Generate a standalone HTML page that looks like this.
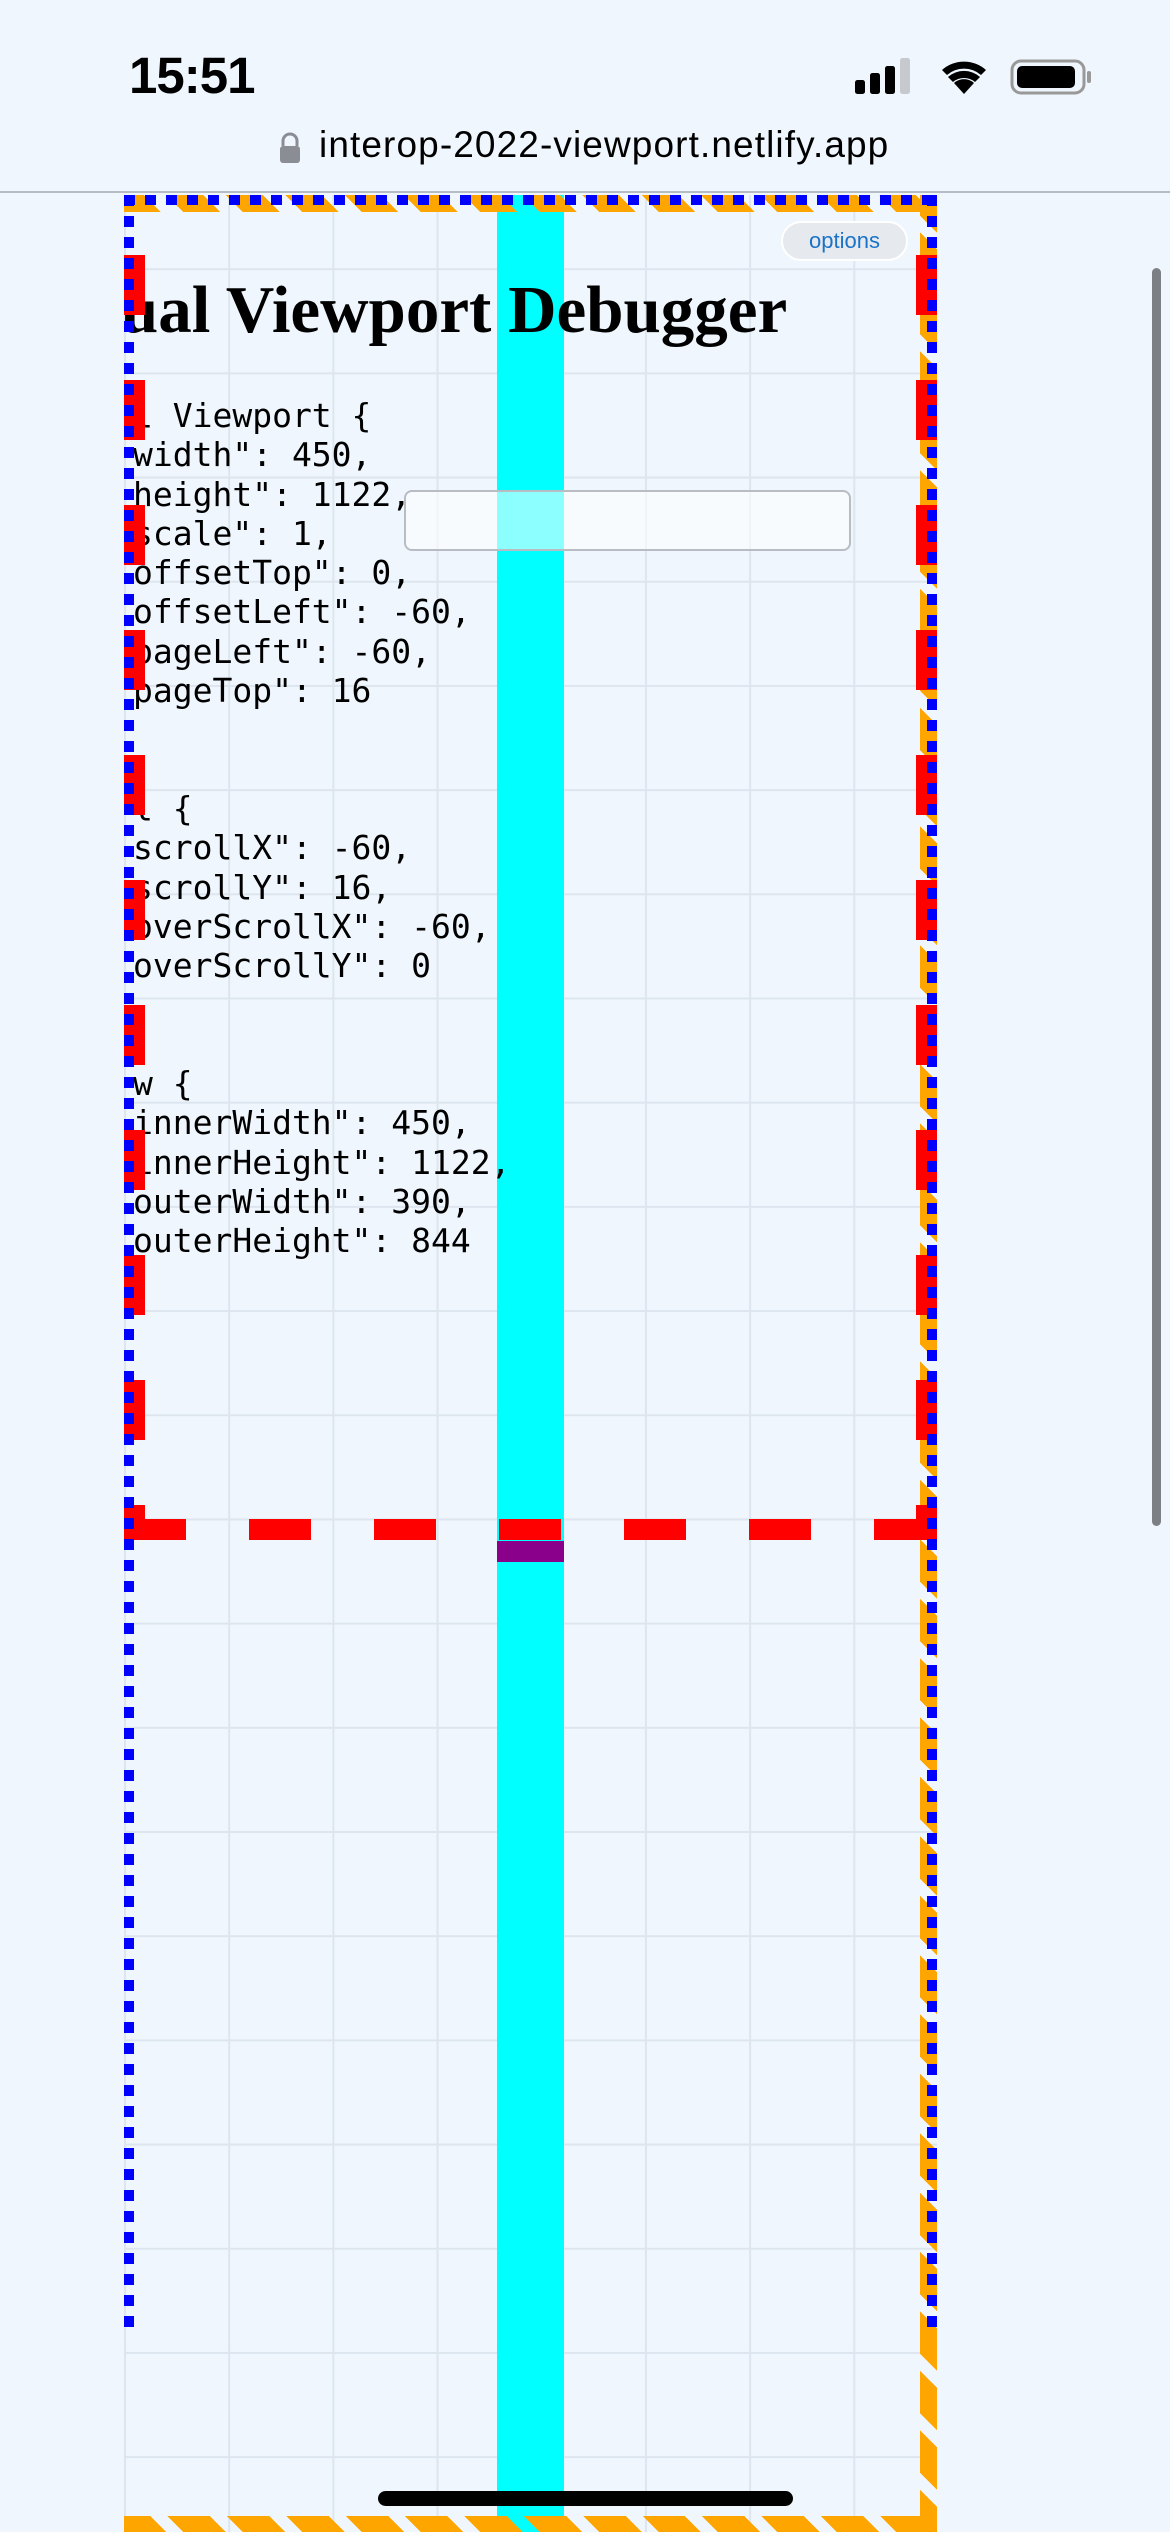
<!DOCTYPE html>
<html><head><meta charset="utf-8"><style>
*{margin:0;padding:0;box-sizing:border-box}
html,body{width:1170px;height:2532px;overflow:hidden;background:#eff6fd;position:relative}
.abs{position:absolute}
#grid{left:124px;top:195px;width:813px;height:2337px;
background-image:linear-gradient(to right,#dde5ee 2px,transparent 2px),linear-gradient(to bottom,#dde5ee 2px,transparent 2px);
background-size:104.2px 104.2px;background-position:0 -31px}
#cyan{left:497px;top:195px;width:67px;height:2337px;background:#00ffff}
#purple{left:497px;top:1541px;width:67px;height:21px;background:#8b008b}
.pre{left:133px;font-family:"DejaVu Sans Mono","Liberation Mono",monospace;font-size:33px;line-height:39.3px;color:#000;white-space:pre}
</style></head><body>
<!-- status bar -->
<div class="abs" style="left:129px;top:46px;font-family:'Liberation Sans',sans-serif;font-weight:bold;font-size:51px;letter-spacing:-1px;color:#000">15:51</div>
<svg class="abs" style="left:850px;top:55px" width="250" height="45" viewBox="0 0 250 45">
<rect x="5" y="25" width="10" height="14" rx="2.5" fill="#000"/>
<rect x="20" y="18" width="10" height="21" rx="2.5" fill="#000"/>
<rect x="35" y="11" width="10" height="28" rx="2.5" fill="#000"/>
<rect x="50" y="3" width="10" height="36" rx="2.5" fill="#c6c9ce"/>
<path d="M114 39 L104 28 A15 15 0 0 1 124 28 Z" fill="#000"/>
<path d="M98 22 A24 24 0 0 1 130 22 L125 27 A17 17 0 0 0 103 27 Z" fill="#000"/>
<path d="M92 15 A33 33 0 0 1 136 15 L131 20 A26 26 0 0 0 97 20 Z" fill="#000"/>
<rect x="162" y="6" width="72" height="32" rx="9" fill="none" stroke="#999" stroke-width="3"/>
<rect x="167" y="11" width="58" height="22" rx="5" fill="#000"/>
<rect x="237" y="16" width="4" height="12" rx="2" fill="#999"/>
</svg>
<svg class="abs" style="left:278px;top:132px" width="24" height="32" viewBox="0 0 24 32"><path d="M5 14 V9 A7 7 0 0 1 19 9 V14" fill="none" stroke="#8a8d93" stroke-width="3"/><rect x="2" y="14" width="20" height="17" rx="3" fill="#8a8d93"/></svg>
<div class="abs" style="left:319px;top:124px;font-family:'Liberation Sans',sans-serif;font-size:37px;letter-spacing:1.1px;color:#000">interop-2022-viewport.netlify.app</div>
<div class="abs" style="left:0;top:191px;width:1170px;height:2px;background:#b6bcc4"></div>

<div id="grid" class="abs"></div>
<div id="cyan" class="abs"></div>
<div id="purple" class="abs"></div>

<!-- heading -->
<div class="abs" style="left:124px;top:272px;width:813px;height:100px;overflow:hidden">
<div style="position:absolute;left:-3px;top:0;font-family:'Liberation Serif',serif;font-weight:bold;font-size:67px;white-space:nowrap">ual Viewport Debugger</div></div>

<div class="abs pre" style="top:396px">l Viewport {
width": 450,
height": 1122,
scale": 1,
offsetTop": 0,
offsetLeft": -60,
pageLeft": -60,
pageTop": 16


l {
scrollX": -60,
scrollY": 16,
overScrollX": -60,
overScrollY": 0


w {
innerWidth": 450,
innerHeight": 1122,
outerWidth": 390,
outerHeight": 844</div>

<!-- input -->
<div class="abs" style="left:404px;top:490px;width:447px;height:61px;border:2px solid #b9bcc2;border-radius:8px;background:rgba(255,255,255,0.55)"></div>
<!-- options -->
<div class="abs" style="left:781px;top:221px;width:127px;height:40px;border-radius:20px;background:#e6e9ee;border:2px solid #fff;font-family:'Liberation Sans',sans-serif;font-size:22px;color:#1a73c8;text-align:center;line-height:36px">options</div>

<!-- orange stripes -->
<div class="abs" style="left:124px;top:195px;width:813px;height:17px;background:repeating-linear-gradient(45deg,#ffa500 0 26px,transparent 26px 42px)"></div>
<div class="abs" style="left:920px;top:195px;width:17px;height:2337px;background:repeating-linear-gradient(45deg,#ffa500 0 30px,transparent 30px 42px)"></div>
<div class="abs" style="left:124px;top:2516px;width:813px;height:16px;background:repeating-linear-gradient(45deg,#ffa500 0 30px,transparent 30px 42px)"></div>

<!-- red dashed -->
<div class="abs" style="left:124px;top:255px;width:21px;height:1285px;background:repeating-linear-gradient(180deg,#ff0000 0 60px,transparent 60px 125px)"></div>
<div class="abs" style="left:916px;top:255px;width:21px;height:1285px;background:repeating-linear-gradient(180deg,#ff0000 0 60px,transparent 60px 125px)"></div>
<div class="abs" style="left:124px;top:1519px;width:813px;height:21px;background:repeating-linear-gradient(90deg,#ff0000 0 62px,transparent 62px 125px)"></div>
<div class="abs" style="left:876px;top:1519px;width:61px;height:21px;background:#ff0000"></div>

<!-- blue dotted -->
<div class="abs" style="left:124px;top:195px;width:813px;height:10px;background:repeating-linear-gradient(90deg,#0000ff 0 11px,transparent 11px 21px)"></div>
<div class="abs" style="left:124px;top:195px;width:10px;height:2132px;background:repeating-linear-gradient(180deg,#0000ff 0 11px,transparent 11px 21px)"></div>
<div class="abs" style="left:927px;top:195px;width:10px;height:2132px;background:repeating-linear-gradient(180deg,#0000ff 0 11px,transparent 11px 21px)"></div>

<!-- scrollbar -->
<div class="abs" style="left:1152px;top:268px;width:9px;height:1258px;border-radius:5px;background:#7c7f84"></div>
<!-- home indicator -->
<div class="abs" style="left:378px;top:2491px;width:415px;height:15px;border-radius:8px;background:#000"></div>
</body></html>
